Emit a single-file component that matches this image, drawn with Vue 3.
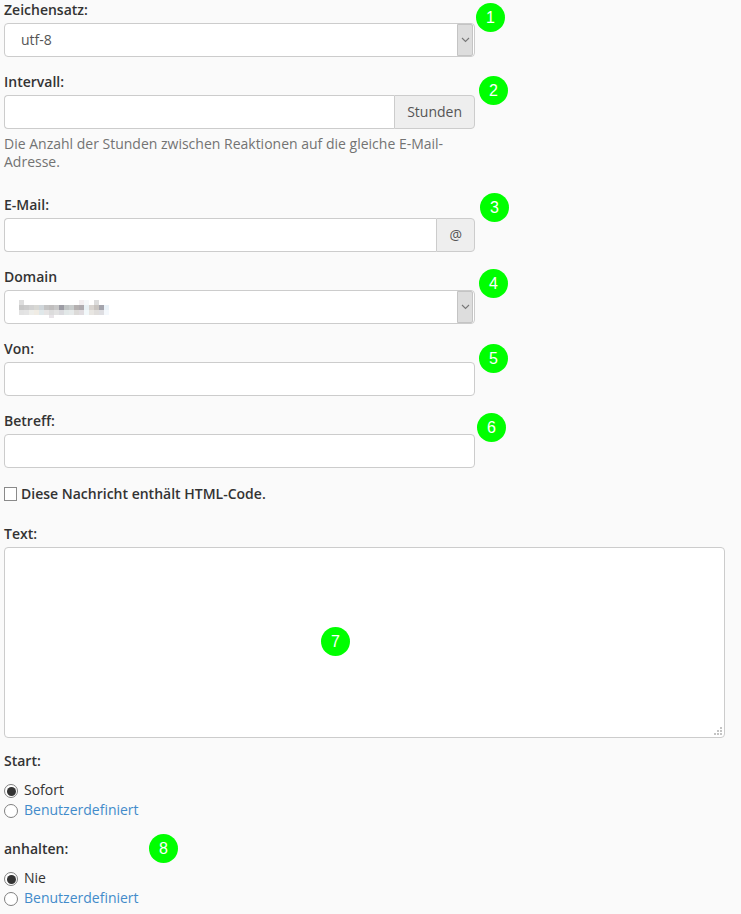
<script setup>
const startOptions = [
  { label: 'Sofort', checked: true },
  { label: 'Benutzerdefiniert', checked: false }
]
const stopOptions = [
  { label: 'Nie', checked: true },
  { label: 'Benutzerdefiniert', checked: false }
]

// numbered markers placed on top of the form
const markers = [
  { n: 1, x: 476, y: 3 },
  { n: 2, x: 479, y: 76 },
  { n: 3, x: 480, y: 193 },
  { n: 4, x: 479, y: 269 },
  { n: 5, x: 479, y: 344 },
  { n: 6, x: 477, y: 413 },
  { n: 7, x: 321, y: 627 },
  { n: 8, x: 149, y: 834 }
]

// pixelated domain name, 5px blocks
const mosaic = [
  { y: 0, h: 5, colors: ['#dedede', null, null, null, null, null, null, null, null, null, null, null, '#f2eef0', '#f6f8fa', null, '#dcdcdc', null, null] },
  { y: 5, h: 5, colors: ['#c8c8c8', '#cccccc', '#d2d2d2', '#d8d8d4', '#d0d6da', '#c4c4c4', '#c0bebe', '#c8c8c8', '#9c9ca4', '#c0c4c4', '#c8cccc', '#b4b0b0', '#aeaaae', '#e8f0f4', '#d8d4d0', '#c8c4c0', '#a4a4ac', '#eaf2f8'] },
  { y: 10, h: 5, colors: ['#e2e2e2', '#e4e4e4', '#eeeeea', '#f0ece4', '#e0e8ea', '#e6e4e4', '#dcdcdc', '#e2e2e2', '#dadade', '#e2e8e8', '#e6eaea', '#dcdad8', '#e0dce0', '#f2f8fa', '#e8e6e2', '#e0dedc', '#dedee2', '#f4f8fc'] }
]
</script>

<template>
  <div class="page">
    <form class="form" @submit.prevent>
      <div class="group">
        <label class="label">Zeichensatz:</label>
        <div class="select-wrap">
          <select class="control select">
            <option>utf-8</option>
          </select>
          <span class="select-arrow">
            <svg width="9" height="6" viewBox="0 0 9 6"><path d="M1 1l3.5 3.5L8 1" fill="none" stroke="#777" stroke-width="1.1" /></svg>
          </span>
        </div>
      </div>

      <div class="group group-help">
        <label class="label">Intervall:</label>
        <div class="input-group">
          <input class="control joined" type="text" />
          <span class="addon">Stunden</span>
        </div>
        <p class="help">Die Anzahl der Stunden zwischen Reaktionen auf die gleiche E-Mail-Adresse.</p>
      </div>

      <div class="group">
        <label class="label">E-Mail:</label>
        <div class="input-group">
          <input class="control joined" type="text" />
          <span class="addon">@</span>
        </div>
      </div>

      <div class="group">
        <label class="label">Domain</label>
        <div class="select-wrap">
          <select class="control select"></select>
          <svg class="mosaic" width="90" height="18" viewBox="0 0 90 18" shape-rendering="crispEdges">
            <g v-for="row in mosaic" :key="row.y">
              <template v-for="(c, i) in row.colors" :key="i">
                <rect v-if="c" :x="i * 5" :y="row.y" width="5" :height="row.h" :fill="c" />
              </template>
            </g>
            <rect x="30" y="15" width="5" height="3" fill="#e8e4e8" />
          </svg>
          <span class="select-arrow">
            <svg width="9" height="6" viewBox="0 0 9 6"><path d="M1 1l3.5 3.5L8 1" fill="none" stroke="#777" stroke-width="1.1" /></svg>
          </span>
        </div>
      </div>

      <div class="group">
        <label class="label">Von:</label>
        <input class="control" type="text" />
      </div>

      <div class="group group-last">
        <label class="label">Betreff:</label>
        <input class="control" type="text" />
      </div>

      <label class="check">
        <span class="check-box"></span>
        Diese Nachricht enthält HTML-Code.
      </label>

      <div class="group group-text">
        <label class="label">Text:</label>
        <div class="textarea-wrap">
          <textarea class="control textarea"></textarea>
          <svg class="grip" width="9" height="9" viewBox="0 0 9 9" shape-rendering="crispEdges">
            <path d="M6 0h2v2H6zM6 3h2v2H6zM3 3h2v2H3zM6 6h2v2H6zM3 6h2v2H3zM0 6h2v2H0z" fill="#c4c4c4" />
          </svg>
        </div>
      </div>

      <div class="group-radio">
        <div class="label radio-title">Start:</div>
        <div v-for="o in startOptions" :key="o.label" class="radio">
          <span class="radio-dot" :class="{ on: o.checked }"></span>
          <span :class="{ link: !o.checked }">{{ o.label }}</span>
        </div>
      </div>

      <div class="group-radio">
        <div class="label radio-title">anhalten:</div>
        <div v-for="o in stopOptions" :key="o.label" class="radio">
          <span class="radio-dot" :class="{ on: o.checked }"></span>
          <span :class="{ link: !o.checked }">{{ o.label }}</span>
        </div>
      </div>
    </form>

    <span
      v-for="m in markers"
      :key="m.n"
      class="marker"
      :style="{ left: m.x + 'px', top: m.y + 'px' }"
    >{{ m.n }}</span>
  </div>
</template>

<style>
html, body {
  margin: 0;
  background: #fafafa;
}
</style>

<style scoped>
.page {
  position: relative;
  height: 914px;
  overflow: hidden;
  padding-left: 4px;
  box-sizing: border-box;
  font-family: "Open Sans", sans-serif;
  font-size: 14px;
  line-height: 20px;
  color: #333;
  background: #fafafa;
}

.form {
  width: 471px;
}

.group {
  margin-bottom: 15px;
}

.group-help {
  margin-bottom: 24px;
}

.group-last {
  margin-bottom: 16px;
}

.label {
  display: block;
  height: 19px;
  margin-bottom: 4px;
  font-weight: 600;
  color: #333;
}

.control {
  display: block;
  width: 100%;
  height: 34px;
  box-sizing: border-box;
  padding: 6px 12px;
  border: 1px solid #ccc;
  border-radius: 4px;
  background: #fff;
  font: inherit;
  color: #555;
  outline: none;
}

.select-wrap {
  position: relative;
}

.select {
  appearance: none;
  padding-left: 16px;
}

.select-arrow {
  position: absolute;
  top: 1px;
  right: 2px;
  width: 16px;
  height: 32px;
  box-sizing: border-box;
  display: flex;
  align-items: center;
  justify-content: center;
  background: #ddd;
  border: 1px solid #c4c4c4;
  border-radius: 0 2px 2px 0;
}

.mosaic {
  position: absolute;
  left: 15px;
  top: 10px;
}

.input-group {
  display: flex;
}

.joined {
  flex: 1;
  min-width: 0;
  border-right: 0;
  border-radius: 4px 0 0 4px;
}

.addon {
  flex: none;
  box-sizing: border-box;
  height: 34px;
  padding: 6px 12px;
  border: 1px solid #ccc;
  border-radius: 0 4px 4px 0;
  background: #eee;
  color: #555;
}

.help {
  margin: 6px 0 0;
  line-height: 18px;
  color: #737373;
}

.check {
  display: flex;
  align-items: center;
  gap: 4px;
  height: 20px;
  margin-bottom: 20px;
  font-weight: 600;
}

.check-box {
  width: 13px;
  height: 14px;
  box-sizing: border-box;
  border: 1px solid #8a8a8a;
  background: #fff;
}

.group-text {
  width: 721px;
  margin-bottom: 13px;
}

.textarea-wrap {
  position: relative;
}

.textarea {
  height: 191px;
  resize: none;
}

.grip {
  position: absolute;
  right: 2px;
  bottom: 2px;
}

.group-radio {
  margin-bottom: 19px;
}

.radio-title {
  margin-bottom: 10px;
}

.radio {
  display: flex;
  align-items: center;
  gap: 7px;
  height: 20px;
}

.radio-dot {
  position: relative;
  width: 14px;
  height: 14px;
  margin-top: 2px;
  box-sizing: border-box;
  border: 1.5px solid #808080;
  border-radius: 50%;
  background: #fff;
}

.radio-dot.on::after {
  content: "";
  position: absolute;
  inset: 1.5px;
  border-radius: 50%;
  background: #333;
}

.radio > span:last-child {
  margin-left: -1px;
}

.link {
  color: #428bca;
}

.marker {
  position: absolute;
  width: 29px;
  height: 29px;
  border-radius: 50%;
  background: #0f0;
  color: #fff;
  font-family: "Liberation Sans", sans-serif;
  font-size: 16px;
  line-height: 29px;
  text-align: center;
}
</style>
